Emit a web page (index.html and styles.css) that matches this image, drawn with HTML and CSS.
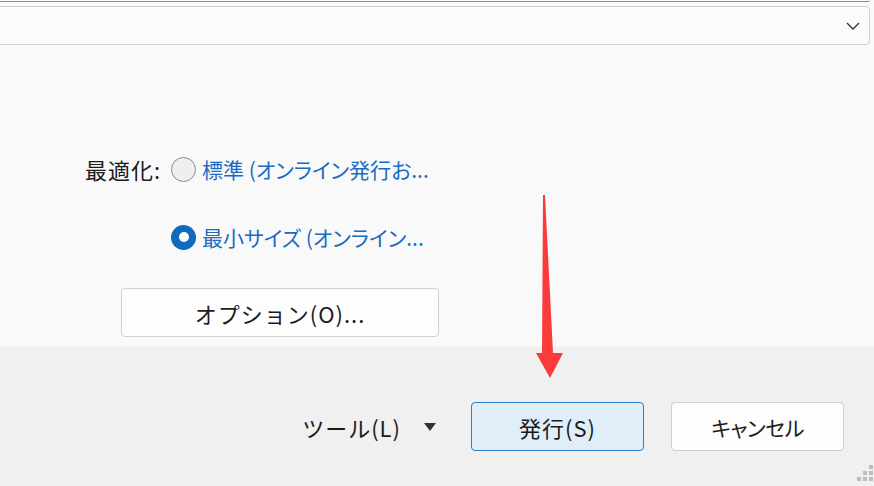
FILE: index.html
```html
<!DOCTYPE html>
<html lang="ja">
<head>
<meta charset="utf-8">
<link rel="stylesheet" href="styles.css">
</head>
<body>
<div class="page">
  <div class="main">
    <div class="top-edge"></div>
    <div class="select">
      <svg class="chevron" width="14" height="8" viewBox="0 0 14 8"><path d="M1 1 L7 7 L13 1" fill="none" stroke="#333" stroke-width="1.3"/></svg>
    </div>
    <div class="form">
      <div class="label">最適化:</div>
      <div class="radio-row"><span class="radio"></span><span class="radio-text">標準 (オンライン発行お...</span></div>
      <div></div>
      <div class="radio-row"><span class="radio checked"></span><span class="radio-text">最小サイズ (オンライン...</span></div>
    </div>
    <button class="btn options">オプション(O)...</button>
  </div>
  <div class="footer">
    <div class="tools">ツール(L)<span class="caret"></span></div>
    <button class="btn primary">発行(S)</button>
    <button class="btn cancel">キャンセル</button>
  </div>
  <svg class="arrow" width="874" height="486" viewBox="0 0 874 486"><polygon points="543,195 545,195 553,353 563,353 550,378 536,353 542,353" fill="#fb3b3b"/></svg>
  <div class="grip">
    <span style="left:12px;top:0"></span>
    <span style="left:6px;top:6px"></span><span style="left:12px;top:6px"></span>
    <span style="left:0;top:12px"></span><span style="left:6px;top:12px"></span><span style="left:12px;top:12px"></span>
  </div>
</div>
</body>
</html>
```
FILE: styles.css
```css
* { box-sizing: border-box; }
html, body { margin: 0; padding: 0; }
body {
  width: 874px; height: 486px; overflow: hidden;
  font-family: "Noto Sans CJK JP", "Noto Sans", sans-serif;
  color: #1b1b1b;
  background: #f9f9f9;
}
.page { position: relative; width: 874px; height: 486px; display: flex; flex-direction: column; }
.main { height: 347px; background: #f9f9f9; display: flex; flex-direction: column; }
.top-edge {
  width: 870px; height: 2px;
  border-bottom: 1px solid #8c8c8c; border-right: 1px solid #c9c9c9;
  border-bottom-right-radius: 3px;
}
.select {
  margin-top: 4px; margin-left: -4px;
  width: 874px; height: 39px;
  border: 1px solid #d0d0d0; border-radius: 4px;
  background: #fbfbfb;
  display: flex; align-items: center; justify-content: flex-end;
  padding-right: 9px;
}
.chevron { display: block; }
.form {
  margin-top: 107px;
  display: grid; grid-template-columns: 160px auto;
  column-gap: 11px; row-gap: 34px;
  align-items: center;
}
.label { justify-self: end; font-size: 22px; letter-spacing: 1px; line-height: 34px; margin-right: -1px; }
.radio-row { display: flex; align-items: center; height: 34px; gap: 6px; }
.radio {
  width: 25px; height: 25px; border-radius: 50%;
  border: 1.5px solid #8a8a8a; background: #efefef;
  display: flex; align-items: center; justify-content: center;
}
.radio.checked { border: none; background: #0f6cbd; }
.radio.checked::after { content: ""; width: 10px; height: 10px; border-radius: 50%; background: #fff; }
.radio-text { color: #1a6cc2; font-size: 21px; font-feature-settings: "palt"; }
.btn {
  font-family: inherit;
  font-size: 22px; letter-spacing: 1px; color: #1b1b1b;
  height: 49px; border-radius: 4px; padding: 0;
  border: 1px solid #d0d0d0; background: #fdfdfd;
}
.options { margin-top: 34px; margin-left: 121px; width: 318px; }
.footer {
  flex: 1; background: #f0f0f0;
  display: flex; align-items: flex-start; justify-content: flex-end;
  padding: 55px 30px 0 0; gap: 27px;
}
.tools {
  height: 49px; display: flex; align-items: center;
  font-size: 22px; letter-spacing: 1px; margin-right: 8px;
}
.caret {
  margin-left: 23px; width: 0; height: 0;
  border-left: 6px solid transparent; border-right: 6px solid transparent;
  border-top: 8px solid #333;
}
.primary { width: 173px; background: #e0eef9; border-color: #2a7fcf; }
.cancel { width: 173px; font-size: 21px; letter-spacing: -0.5px; font-feature-settings: "palt"; }
.arrow { position: absolute; left: 0; top: 0; pointer-events: none; }
.grip { position: absolute; left: 857px; top: 465px; width: 20px; height: 20px; }
.grip span { position: absolute; width: 4px; height: 4px; background: #bdbdbd; }
```
